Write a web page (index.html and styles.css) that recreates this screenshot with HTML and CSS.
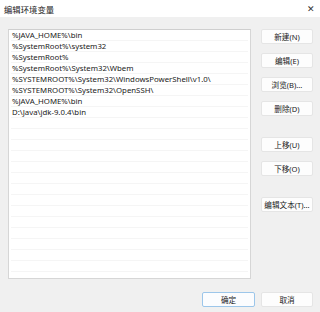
FILE: index.html
```html
<!DOCTYPE html>
<html lang="zh-CN">
<head>
  <meta charset="UTF-8" />
  <title>编辑环境变量</title>
  <link rel="stylesheet" href="styles.css">
</head>
<body>
  <div class="dialog">
    <div class="titlebar">
      <span class="title">编辑环境变量</span>
      <span class="close">✕</span>
    </div>

    <div class="main">
      <div class="listbox">
        <div class="row">%JAVA_HOME%\bin</div>
        <div class="row">%SystemRoot%\system32</div>
        <div class="row">%SystemRoot%</div>
        <div class="row">%SystemRoot%\System32\Wbem</div>
        <div class="row">%SYSTEMROOT%\System32\WindowsPowerShell\v1.0\</div>
        <div class="row">%SYSTEMROOT%\System32\OpenSSH\</div>
        <div class="row">%JAVA_HOME%\bin</div>
        <div class="row">D:\Java\jdk-9.0.4\bin</div>
        <div class="row"></div><div class="row"></div><div class="row"></div>
        <div class="row"></div><div class="row"></div><div class="row"></div>
        <div class="row"></div><div class="row"></div><div class="row"></div>
        <div class="row"></div><div class="row"></div><div class="row"></div>
        <div class="row"></div><div class="row"></div><div class="row"></div>
      </div>

      <div class="actions">
        <div class="group">
          <button class="btn">新建(N)</button>
          <button class="btn">编辑(E)</button>
          <button class="btn">浏览(B)...</button>
          <button class="btn">删除(D)</button>
        </div>
        <div class="group">
          <button class="btn">上移(U)</button>
          <button class="btn">下移(O)</button>
        </div>
        <div class="group">
          <button class="btn">编辑文本(T)...</button>
        </div>
      </div>
    </div>

    <div class="footer">
      <button class="btn default">确定</button>
      <button class="btn">取消</button>
    </div>
  </div>
</body>
</html>
```

FILE: styles.css
```css
/* ---------- BASE ---------- */
*{margin:0;padding:0;box-sizing:border-box;}
html,body{
  width:320px;height:312px;
  background:#f0f0f0;
  font-family:"Noto Sans","Noto Sans CJK SC",sans-serif;
  color:#1a1a1a;
  overflow:hidden;
}
.dialog{width:320px;height:312px;display:flex;flex-direction:column;}

/* ---------- TITLE BAR ---------- */
.titlebar{
  height:17px;background:#fff;
  display:flex;align-items:center;justify-content:space-between;
  padding:0 5px 0 4px;
}
.title{font-size:8.4px;color:#222;}
.close{font-size:9px;color:#333;line-height:1;}

/* ---------- LIST + BUTTONS ---------- */
.main{display:flex;gap:10px;padding:12px 7px 0 8px;}
.listbox{
  width:243px;height:250px;
  background:#fff;
  border:1px solid #d6d6d6;
  border-top-color:#cfcfcf;
  padding:0 2px;
  overflow:hidden;
}
.row{
  height:11px;line-height:11px;
  font-size:7.8px;
  padding-left:1px;
  border-bottom:1px solid #f5f5f5;
  white-space:nowrap;
}

.actions{width:52px;display:flex;flex-direction:column;gap:21px;}
.group{display:flex;flex-direction:column;gap:9px;}

.btn{
  height:15px;width:52px;
  font-family:inherit;font-size:7.6px;color:#1a1a1a;
  background:#fdfdfd;
  border:1px solid #e5e5e5;
  border-radius:2px;
}
.btn.default{border-color:#9cc6ea;background:#fbfcfe;}

/* ---------- FOOTER ---------- */
.footer{display:flex;justify-content:flex-end;gap:6px;padding:13px 7px 0 0;}
.footer .btn{width:53px;}
.footer .btn:last-child{width:52px;}
```
